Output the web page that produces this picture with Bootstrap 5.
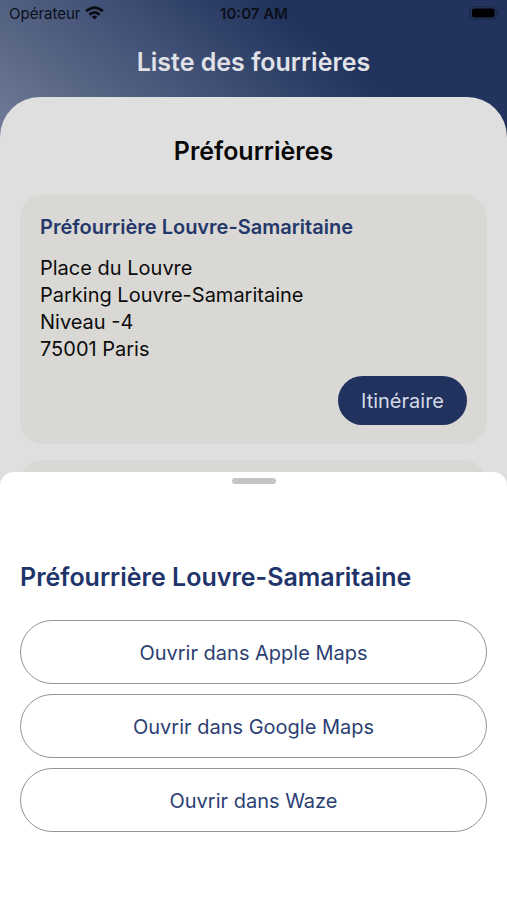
<!DOCTYPE html>
<html lang="fr">
<head>
<meta charset="utf-8">
<meta name="viewport" content="width=device-width, initial-scale=1">
<title>Liste des fourrières</title>
<link href="https://cdn.jsdelivr.net/npm/bootstrap@5.3.0/dist/css/bootstrap.min.css" rel="stylesheet">
<style>
  body { font-family: Inter, "Liberation Sans", sans-serif; color: #0c0c0c; }
  .app-screen {
    height: 100vh;
    background: #dfdfdf linear-gradient(38deg, #737e9b 0%, #5a6886 20%, #3f4f75 42%, #22345d 65%) no-repeat top / 100% 144px;
  }
  .status-bar { height: 27px; padding: 0 8px 0 9px; font-size: 15px; line-height: 20px; color: #0b0f1a; }
  .status-bar .clock { font-weight: 600; }
  .status-icon { margin-bottom: 1px; }
  .screen-title { height: 70px; font-size: 25px; font-weight: 600; color: #e0e2e8; }
  .content-panel { background: #dfdfdf; border-radius: 40px 40px 0 0; padding: 36px 20px 0; min-height: 800px; }
  .section-title { font-size: 25px; line-height: 36px; font-weight: 600; color: #080808; margin-bottom: 25px; }
  .pound-card { background: #d9d8d5; border-radius: 24px; padding: 19px 20px; margin-bottom: 16px; min-height: 250px; }
  .pound-name { font-size: 20px; line-height: 28px; font-weight: 600; color: #24376a; margin-bottom: 14px; }
  .pound-address { font-size: 20px; line-height: 27px; margin-bottom: 13px; }
  .btn-route { background: #20325d; color: #d4dbe6; font-size: 20px; line-height: 30px; padding: 10px 23px 9px; border: 0; }
  .btn-route:hover { background: #2b417a; color: #fff; }
  .maps-sheet { background: #fff; border-radius: 14px 14px 0 0; padding: 6px 20px 68px; }
  .sheet-grip { width: 44px; height: 6px; background: #c4c4c4; margin-bottom: 76px; }
  .sheet-title { font-size: 25px; line-height: 34px; font-weight: 600; color: #20346a; margin-bottom: 26px; }
  .map-choices { gap: 10px; }
  .btn-map { background: #fff; color: #2c3f73; border: 1px solid #949494; font-size: 20px; line-height: 30px; padding: 17px 20px 15px; }
  .btn-map:hover { background: #f1f3f8; color: #20346a; border-color: #949494; }
</style>
</head>
<body>
<div class="app-screen overflow-hidden">
  <div class="status-bar row g-0 align-items-center">
    <div class="col d-flex align-items-center gap-1">
      <span>Opérateur</span>
      <svg class="status-icon" width="20" height="14" viewBox="0 0 20 14" role="img" aria-label="Wi-Fi">
        <g fill="none" stroke="#080b12" stroke-width="2.7">
          <path d="M1.2 5.1Q9.5 -1.9 17.8 5.1"/>
          <path d="M4.4 8.6Q9.5 4.3 14.6 8.6"/>
        </g>
        <path fill="#080b12" d="M6.7 10.7Q9.5 8.4 12.3 10.7L9.5 13.5Z"/>
      </svg>
    </div>
    <div class="col-auto clock">10:07 AM</div>
    <div class="col d-flex justify-content-end">
      <svg class="status-icon" width="30" height="14" viewBox="0 0 30 14" role="img" aria-label="Batterie">
        <rect x="1.2" y=".7" width="26" height="12.6" rx="3.6" fill="none" stroke="#1b2946" stroke-width="1.2"/>
        <rect x="3" y="2.5" width="22.5" height="9" rx="2" fill="#000"/>
        <path d="M28.2 4.7Q30 5.3 30 7T28.2 9.3Z" fill="#1b2946"/>
      </svg>
    </div>
  </div>
  <h1 class="screen-title d-flex align-items-center justify-content-center m-0">Liste des fourrières</h1>
  <main class="content-panel">
    <h2 class="section-title text-center">Préfourrières</h2>
    <article class="pound-card">
      <h3 class="pound-name">Préfourrière Louvre-Samaritaine</h3>
      <address class="pound-address">Place du Louvre<br>Parking Louvre-Samaritaine<br>Niveau -4<br>75001 Paris</address>
      <div class="d-flex justify-content-end">
        <button type="button" class="btn btn-route rounded-pill">Itinéraire</button>
      </div>
    </article>
    <article class="pound-card"></article>
  </main>
</div>
<section class="maps-sheet fixed-bottom" aria-labelledby="sheet-title">
  <div class="sheet-grip rounded-pill mx-auto"></div>
  <h2 class="sheet-title" id="sheet-title">Préfourrière Louvre-Samaritaine</h2>
  <div class="map-choices d-grid">
    <button type="button" class="btn btn-map rounded-pill">Ouvrir dans Apple Maps</button>
    <button type="button" class="btn btn-map rounded-pill">Ouvrir dans Google Maps</button>
    <button type="button" class="btn btn-map rounded-pill">Ouvrir dans Waze</button>
  </div>
</section>
<script src="https://cdn.jsdelivr.net/npm/bootstrap@5.3.0/dist/js/bootstrap.bundle.min.js"></script>
</body>
</html>
